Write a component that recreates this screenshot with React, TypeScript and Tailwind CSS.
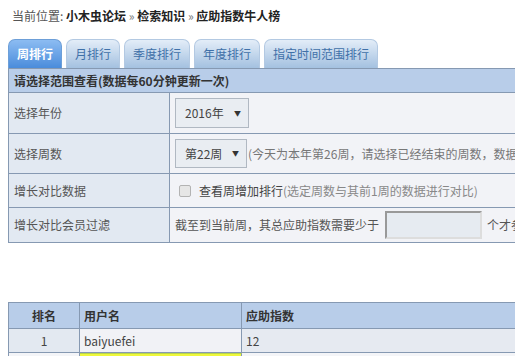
import React from "react";

const tabs = ["周排行", "月排行", "季度排行", "年度排行", "指定时间范围排行"];

export default function App() {
  return (
    <div className="w-[515px] h-[356px] overflow-hidden bg-white font-['Noto_Sans_CJK_SC','Noto_Sans',sans-serif] text-[12px] text-[#444]">
      {/* breadcrumb */}
      <div className="h-[39px] pl-[12px] pt-[7px] leading-[18px] whitespace-nowrap">
        <span className="text-[#555]">当前位置: </span>
        <span className="font-bold text-[#222]">小木虫论坛</span>
        <span className="text-[#777]"> » </span>
        <span className="font-bold text-[#222]">检索知识</span>
        <span className="text-[#777]"> » </span>
        <span className="font-bold text-[#222]">应助指数牛人榜</span>
      </div>

      {/* tabs */}
      <div className="flex items-end gap-[4px] pl-[8px] h-[29px]">
        {tabs.map((t, i) => (
          <div
            key={t}
            className={
              i === 0
                ? "h-[29px] px-[8px] rounded-t-[7px] border border-b-0 border-[#6d9fd8] bg-linear-to-b from-[#8cbcf2] to-[#4a8cdb] text-white font-bold leading-[28px] whitespace-nowrap"
                : "h-[29px] px-[8px] rounded-t-[7px] border border-b-0 border-[#b3c9e2] bg-linear-to-b from-[#e3edf8] to-[#a4c1e0] text-[#3f70a8] leading-[28px] whitespace-nowrap"
            }
          >
            {t}
          </div>
        ))}
      </div>

      {/* form table */}
      <div className="ml-[8px] w-[680px] border border-[#8699b2]">
        <div className="h-[24px] bg-[#b8cde9] border-b border-[#8699b2] pl-[5px] leading-[24px] font-bold text-[#333] whitespace-nowrap">
          请选择范围查看(数据每60分钟更新一次)
        </div>
        <div className="flex h-[41px] border-b border-[#8699b2]">
          <div className="w-[161px] shrink-0 bg-[#e2e9f2] border-r border-[#8699b2] pl-[5px] flex items-center text-[#555]">选择年份</div>
          <div className="flex-1 bg-[#f2f3f7] flex items-center pl-[5px]">
            <div className="w-[74px] h-[30px] border border-[#b0b8c2] bg-[#e9edf2] flex items-center pl-[9px] pr-[7px] justify-between text-[#444]">
              <span>2016年</span>
              <span className="text-[7px] text-[#333]">▼</span>
            </div>
          </div>
        </div>
        <div className="flex h-[40px] border-b border-[#8699b2]">
          <div className="w-[161px] shrink-0 bg-[#e2e9f2] border-r border-[#8699b2] pl-[5px] flex items-center text-[#555]">选择周数</div>
          <div className="flex-1 bg-[#f2f3f7] flex items-center pl-[5px] whitespace-nowrap">
            <div className="w-[72px] h-[29px] border border-[#b0b8c2] bg-[#e9edf2] flex items-center pl-[9px] pr-[7px] justify-between text-[#444] shrink-0">
              <span>第22周</span>
              <span className="text-[7px] text-[#333]">▼</span>
            </div>
            <span className="text-[#777] ml-[1px]">(今天为本年第26周，请选择已经结束的周数，数据每60分钟更新一次)</span>
          </div>
        </div>
        <div className="flex h-[34px] border-b border-[#8699b2]">
          <div className="w-[161px] shrink-0 bg-[#e2e9f2] border-r border-[#8699b2] pl-[5px] flex items-center text-[#555]">增长对比数据</div>
          <div className="flex-1 bg-[#f2f3f7] flex items-center pl-[9px] whitespace-nowrap">
            <div className="w-[12px] h-[12px] border border-[#b3b3b3] bg-[#e6e6e6] rounded-[2px] shrink-0" />
            <span className="ml-[8px] text-[#444]">查看周增加排行</span>
            <span className="text-[#888]">(选定周数与其前1周的数据进行对比)</span>
          </div>
        </div>
        <div className="flex h-[34px]">
          <div className="w-[161px] shrink-0 bg-[#e2e9f2] border-r border-[#8699b2] pl-[5px] flex items-center text-[#555]">增长对比会员过滤</div>
          <div className="flex-1 bg-[#f2f3f7] flex items-center pl-[5px] whitespace-nowrap text-[#555]">
            <span>截至到当前周，其总应助指数需要少于</span>
            <div className="ml-[6px] w-[97px] h-[28px] border-[2px] border-t-[#999] border-l-[#999] border-r-[#ddd] border-b-[#ddd] bg-[#e6ebf1] shrink-0" />
            <span className="ml-[5px]">个才参与排行</span>
          </div>
        </div>
      </div>

      {/* ranking table */}
      <div className="ml-[8px] mt-[59px] w-[680px] border-t border-l border-[#8699b2]">
        <div className="flex h-[26px] bg-[#b8cde9] border-b border-[#8699b2] font-bold text-[#333]">
          <div className="w-[71px] border-r border-[#8699b2] flex items-center justify-center">排名</div>
          <div className="w-[162px] border-r border-[#8699b2] flex items-center pl-[4px]">用户名</div>
          <div className="flex-1 flex items-center pl-[4px]">应助指数</div>
        </div>
        <div className="flex h-[24px] border-b border-[#8699b2] text-[#444]">
          <div className="w-[71px] bg-[#e3e9f1] border-r border-[#8699b2] flex items-center justify-center">1</div>
          <div className="w-[162px] bg-[#f1f2f6] border-r border-[#8699b2] flex items-center pl-[4px]">baiyuefei</div>
          <div className="flex-1 bg-[#e6eaf1] flex items-center pl-[4px]">12</div>
        </div>
        <div className="flex h-[24px] text-[#444]">
          <div className="w-[71px] bg-[#f4f5f8] border-r border-[#8699b2]" />
          <div className="w-[162px] bg-[#eef83a] border-t border-[#b9d54a] border-r border-r-[#8699b2]" />
          <div className="flex-1 bg-[#f4f5f8]" />
        </div>
      </div>
    </div>
  );
}
